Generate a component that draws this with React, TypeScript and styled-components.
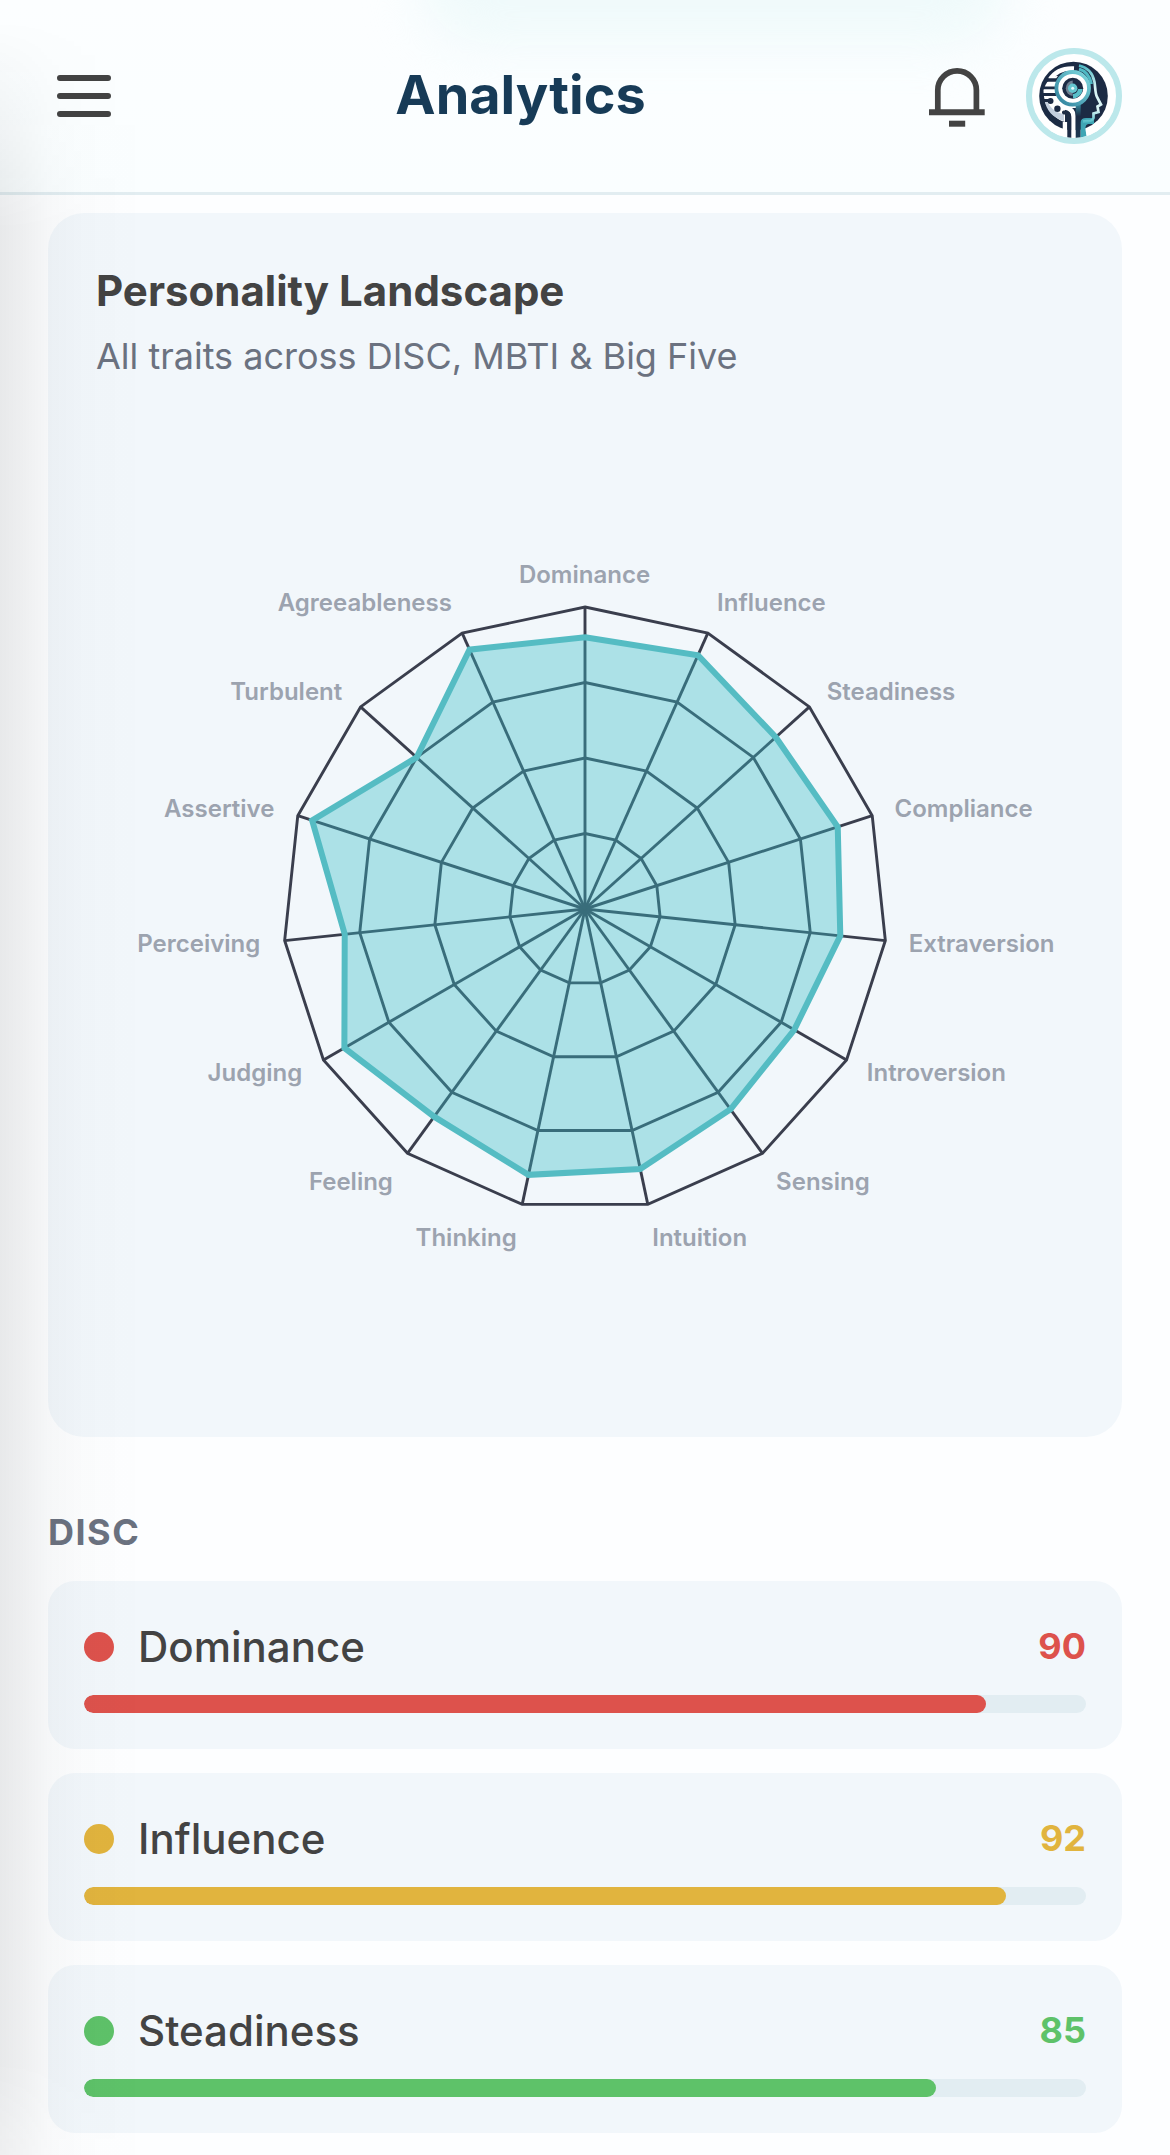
import React from "react";
import styled, { createGlobalStyle } from "styled-components";

const GlobalStyle = createGlobalStyle`
  * { box-sizing: border-box; }
  body { margin: 0; background: #fdfeff; font-family: Inter, "Liberation Sans", sans-serif; }
`;

const Screen = styled.div`
  position: relative;
  width: 1170px;
  height: 2155px;
  overflow: hidden;
  background: #fdfeff;
`;

const EdgeShade = styled.div`
  position: absolute;
  inset: 0 auto 0 0;
  width: 150px;
  pointer-events: none;
  background: linear-gradient(
    to right,
    rgba(20, 24, 28, 0.09) 0,
    rgba(20, 24, 28, 0.065) 22px,
    rgba(20, 24, 28, 0.03) 48px,
    rgba(20, 24, 28, 0.012) 85px,
    rgba(20, 24, 28, 0) 145px
  );
  mask-image: linear-gradient(to bottom, transparent 20px, #000 230px, #000 2060px, rgba(0, 0, 0, 0.7) 2155px);
`;

const Header = styled.header`
  position: relative;
  display: flex;
  align-items: center;
  justify-content: space-between;
  height: 195px;
  padding: 0 48px;
  border-bottom: 3px solid #e2edf1;
  background: linear-gradient(to bottom, #fcfeff, #fafeff);
  overflow: hidden;
`;

const HeaderGlow = styled.div`
  position: absolute;
  top: -80px;
  left: 420px;
  width: 590px;
  height: 125px;
  border-radius: 60px;
  background: #effafb;
  filter: blur(26px);
  pointer-events: none;
`;

const IconButton = styled.button`
  position: relative;
  display: flex;
  width: 72px;
  height: 72px;
  padding: 0;
  border: 0;
  background: none;
  color: #434343;
`;

const HeaderTitle = styled.h1`
  position: relative;
  margin: 0;
  padding-bottom: 3px;
  font-size: 54px;
  line-height: 66px;
  font-weight: 700;
  color: #173b57;
`;

const Actions = styled.div`
  position: relative;
  display: flex;
  align-items: center;
  gap: 33px;
`;

const Avatar = styled.div`
  display: flex;
  width: 96px;
  height: 96px;
  border-radius: 50%;
  border: 6px solid #bce8eb;
  background: #fff;
  overflow: hidden;
`;

const Content = styled.main`
  display: flex;
  flex-direction: column;
  padding: 18px 48px 0;
`;

const ChartCard = styled.section`
  display: flex;
  flex-direction: column;
  height: 1224px;
  padding: 48px;
  border-radius: 36px;
  background: #f2f7fb;
`;

const CardTitle = styled.h2`
  margin: 0;
  font-size: 42px;
  line-height: 60px;
  font-weight: 700;
  color: #434343;
`;

const CardSubtitle = styled.p`
  margin: 9px 0 0;
  font-size: 36px;
  line-height: 52px;
  color: #6b7280;
`;

const Chart = styled.svg`
  display: block;
  width: 978px;
  height: 1007px;
`;

const AxisLabel = styled.text`
  font-size: 24px;
  font-weight: 600;
  fill: #9ca3af;
`;

const SectionTitle = styled.h3`
  margin: 68px 0 22px;
  font-size: 36px;
  line-height: 54px;
  font-weight: 700;
  letter-spacing: 1.5px;
  color: #6b7280;
`;

const TraitList = styled.div`
  display: flex;
  flex-direction: column;
  gap: 24px;
`;

const TraitCard = styled.article`
  display: flex;
  flex-direction: column;
  gap: 18px;
  padding: 36px;
  border-radius: 27px;
  background: #f2f7fb;
`;

const TraitRow = styled.div`
  display: flex;
  align-items: center;
  height: 60px;
`;

const Dot = styled.span<{ $color: string }>`
  width: 30px;
  height: 30px;
  margin-right: 24px;
  border-radius: 50%;
  background: ${(p) => p.$color};
`;

const TraitName = styled.span`
  flex: 1;
  font-size: 42px;
  line-height: 60px;
  font-weight: 500;
  color: #434343;
`;

const TraitValue = styled.span<{ $color: string }>`
  font-size: 36px;
  line-height: 58px;
  padding-bottom: 2px;
  font-weight: 700;
  color: ${(p) => p.$color};
`;

const Track = styled.div`
  height: 18px;
  border-radius: 9px;
  background: #e2edf2;
  overflow: hidden;
`;

const Fill = styled.div<{ $color: string }>`
  height: 100%;
  border-radius: 9px;
  background: ${(p) => p.$color};
`;

const axes: [string, number][] = [
  ["Dominance", 90],
  ["Influence", 92],
  ["Steadiness", 85],
  ["Compliance", 88],
  ["Extraversion", 85],
  ["Introversion", 80],
  ["Sensing", 82],
  ["Intuition", 88],
  ["Thinking", 90],
  ["Feeling", 85],
  ["Judging", 92],
  ["Perceiving", 80],
  ["Assertive", 95],
  ["Turbulent", 75],
  ["Agreeableness", 94],
];

const traits = [
  { name: "Dominance", value: 90, color: "#dd524c" },
  { name: "Influence", value: 92, color: "#e1b43e" },
  { name: "Steadiness", value: 85, color: "#5ec269" },
];

const CX = 489;
const CY = 527;
const RADIUS = 302;
const LABEL_RADIUS = 326;
const LABEL_DROP = 17.7;

const at = (index: number, r: number) => {
  const a = (index * 2 * Math.PI) / axes.length;
  return { x: CX + r * Math.sin(a), y: CY - r * Math.cos(a) };
};

const ring = (radiusOf: (i: number) => number) =>
  axes
    .map((_, i) => {
      const p = at(i, radiusOf(i));
      return `${p.x.toFixed(2)},${p.y.toFixed(2)}`;
    })
    .join(" ");

function RadarChart() {
  return (
    <Chart viewBox="0 0 978 1007">
      <g fill="none" stroke="#3a3e4d" strokeWidth="2.9">
        {[0.25, 0.5, 0.75, 1].map((k) => (
          <polygon key={k} points={ring(() => RADIUS * k)} />
        ))}
        {axes.map(([name], i) => {
          const p = at(i, RADIUS);
          return <line key={name} x1={CX} y1={CY} x2={p.x} y2={p.y} />;
        })}
      </g>
      <polygon points={ring((i) => (RADIUS * axes[i][1]) / 100)} fill="rgba(56,189,198,0.375)" />
      <polygon points={ring((i) => (RADIUS * axes[i][1]) / 100)} fill="none" stroke="#55bcc3" strokeWidth="6" />
      {axes.map(([name], i) => {
        const p = at(i, LABEL_RADIUS);
        const side = p.x - CX;
        const rise = (CY - p.y) / LABEL_RADIUS;
        const drop = rise > 0.8 ? 0 : rise < -0.8 ? LABEL_DROP : LABEL_DROP / 2;
        return (
          <AxisLabel
            key={name}
            x={p.x - 0.5}
            y={p.y + drop}
            textAnchor={Math.abs(side) < 1 ? "middle" : side > 0 ? "start" : "end"}
          >
            {name}
          </AxisLabel>
        );
      })}
    </Chart>
  );
}

function MenuIcon() {
  return (
    <svg width="72" height="72" viewBox="0 0 72 72" stroke="currentColor" strokeWidth="6" strokeLinecap="round">
      <path d="M12 18H60M12 36H60M12 54H60" />
    </svg>
  );
}

function BellIcon() {
  return (
    <svg width="72" height="72" viewBox="0 0 72 72" fill="none" stroke="currentColor" strokeWidth="5.7">
      <path d="M16.800 52V30.200a19.300 19.300 0 0 1 38.600 0V52" />
      <path d="M8 52.300H63.700" strokeWidth="6" />
      <path d="M28 63.700H44.200" strokeWidth="6" />
    </svg>
  );
}

function HeadLogo() {
  return (
    <svg width="84" height="84" viewBox="6 6 84 84">
      <defs>
        <linearGradient id="gear" x1="0" y1="1" x2="1" y2="0">
          <stop offset="0" stopColor="#2f7f9b" />
          <stop offset="1" stopColor="#7fdbe0" />
        </linearGradient>
        <linearGradient id="face" x1="0" y1="0" x2="0" y2="1">
          <stop offset="0" stopColor="#4fb9c4" />
          <stop offset="0.4" stopColor="#d9f4f5" />
          <stop offset="0.8" stopColor="#d9f4f5" />
          <stop offset="1" stopColor="#58bfc9" />
        </linearGradient>
        <linearGradient id="throat" x1="0" y1="0" x2="0" y2="1">
          <stop offset="0" stopColor="#3c9db0" />
          <stop offset="0.4" stopColor="#1c2b44" />
          <stop offset="1" stopColor="#1d3a52" />
        </linearGradient>
      </defs>
      <circle cx="47.5" cy="48" r="34.3" fill="#1c2b44" />
      {/* left hemisphere */}
      <path d="M17.500 42C17.500 58 26 70 39 74V60H52V30L30 28Q20 32 17.500 42z" fill="#fff" />
      <path d="M18.500 52C20 62 27 70 38 73V66C30 65 25 60 22 55z" fill="#c3cfdf" />
      <path d="M24 31.500C29 23.500 38 20 48 20.500" fill="none" stroke="#fff" strokeWidth="4.500" />
      <path d="M21 32H31L35 27" fill="none" stroke="#1c2b44" strokeWidth="3.500" />
      <path d="M24 36.200H30" stroke="#fff" strokeWidth="2.800" />
      <path d="M17 39.800H30M17 46.500H30" stroke="#1c2b44" strokeWidth="2.800" />
      <path d="M17 52.500H24" stroke="#1c2b44" strokeWidth="3" />
      <circle cx="24.500" cy="53" r="3" fill="#1c2b44" />
      <circle cx="31.400" cy="60.700" r="3.200" fill="#1c2b44" />
      {/* background below the jaw */}
      <path d="M6 84L36 82L34 90H6z" fill="#fff" />
      {/* neck */}
      <path d="M39 74V90M47.400 90V68Q47.400 61 39 59.500" fill="none" stroke="#fff" strokeWidth="4.500" />
      <path d="M38 64.500Q43.300 64 43.300 70V90" fill="none" stroke="#1c2b44" strokeWidth="4" strokeLinecap="round" />
      <path d="M49.700 54H54.700V90H49.700z" fill="url(#throat)" />
      <path d="M54.700 90V74Q55 70 60 70H68V76H62.500Q59 76 59.500 82L61 90z" fill="#3fa5b4" />
      <path d="M60 83.500Q70 80 77 74L90 80V90H61z" fill="#fff" />
      {/* profile */}
      <path
        d="M53 17.500C62 19.500 67 26 68.500 34C69.500 40 69 45 71 49L75 56.500L71.500 58.500L72.500 64L67.500 65.500V70Q66.500 73.500 61 73L57 73.500"
        fill="none"
        stroke="url(#face)"
        strokeWidth="2.700"
      />
      <path d="M53 21C60 23 64 29 65.500 36" fill="none" stroke="#4fb9c4" strokeWidth="3" />
      {/* lens */}
      <circle cx="46.700" cy="40.300" r="16.300" fill="#fff" stroke="url(#gear)" strokeWidth="3.800" />
      <circle cx="46.700" cy="40.300" r="10.500" fill="#1c2b44" />
      <path d="M46.700 32.500A7.800 7.800 0 0 0 46.700 48z" fill="#6f8092" />
      <path d="M56.700 41A10 10 0 0 1 47 50.300V46A6 6 0 0 0 52 41z" fill="#58bfc9" />
      <circle cx="46.700" cy="40.300" r="4.700" fill="#65c6cf" />
      <circle cx="46.700" cy="40.300" r="1.500" fill="#e4fafa" />
    </svg>
  );
}

export default function App() {
  return (
    <>
      <GlobalStyle />
      <Screen>
        <Header>
          <HeaderGlow />
          <IconButton aria-label="Menu">
            <MenuIcon />
          </IconButton>
          <HeaderTitle>Analytics</HeaderTitle>
          <Actions>
            <IconButton aria-label="Notifications">
              <BellIcon />
            </IconButton>
            <Avatar>
              <HeadLogo />
            </Avatar>
          </Actions>
        </Header>
        <Content>
          <ChartCard>
            <CardTitle>Personality Landscape</CardTitle>
            <CardSubtitle>All traits across DISC, MBTI &amp; Big Five</CardSubtitle>
            <RadarChart />
          </ChartCard>
          <SectionTitle>DISC</SectionTitle>
          <TraitList>
            {traits.map((t) => (
              <TraitCard key={t.name}>
                <TraitRow>
                  <Dot $color={t.color} />
                  <TraitName>{t.name}</TraitName>
                  <TraitValue $color={t.color}>{t.value}</TraitValue>
                </TraitRow>
                <Track>
                  <Fill $color={t.color} style={{ width: `${t.value}%` }} />
                </Track>
              </TraitCard>
            ))}
          </TraitList>
        </Content>
        <EdgeShade />
      </Screen>
    </>
  );
}
